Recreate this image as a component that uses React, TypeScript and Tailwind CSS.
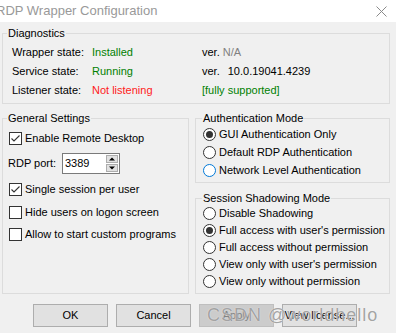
import React from "react";

function Check({ checked, label }: { checked: boolean; label: string }) {
  return (
    <div className="flex items-center h-[16px]">
      <span className="w-[13px] h-[13px] border border-[#333333] bg-white flex items-center justify-center shrink-0">
        {checked && (
          <svg width="11" height="11" viewBox="0 0 11 11">
            <path d="M1.5 5.5 L4 8 L9.5 2.5" fill="none" stroke="#333333" strokeWidth="1.1" />
          </svg>
        )}
      </span>
      <span className="ml-[3px] whitespace-nowrap">{label}</span>
    </div>
  );
}

function Radio({ on, label, h, blue }: { on?: boolean; label: string; h: string; blue?: boolean }) {
  return (
    <div className={"flex items-center " + h}>
      <span
        className={
          "w-[13px] h-[13px] rounded-full border bg-white flex items-center justify-center shrink-0 " +
          (blue ? "border-[#0078d7]" : "border-[#333333]")
        }
      >
        {on && <span className="w-[7px] h-[7px] rounded-full bg-[#333333]" />}
      </span>
      <span className="ml-[3px] whitespace-nowrap">{label}</span>
    </div>
  );
}

function Btn({ children, disabled }: { children: React.ReactNode; disabled?: boolean }) {
  return (
    <div
      className={
        "w-[75px] h-[23px] flex items-center justify-center border " +
        (disabled ? "bg-[#cccccc] border-[#bfbfbf] text-[#838383]" : "bg-[#e1e1e1] border-[#adadad] text-black")
      }
    >
      {children}
    </div>
  );
}

export default function App() {
  return (
    <div className="w-[396px] h-[333px] bg-[#f0f0f0] overflow-hidden relative font-['Liberation_Sans',Arial,sans-serif] text-[11px] leading-[13px] text-black">
      {/* title bar */}
      <div className="h-[22px] bg-white flex items-center justify-between">
        <span className="ml-[-4px] text-[13px] leading-[16px] text-[#999999] whitespace-nowrap">
          RDP Wrapper Configuration
        </span>
        <svg width="11" height="11" viewBox="0 0 11 11" className="mr-[9px]">
          <path d="M0.5 0.5 L10.5 10.5 M10.5 0.5 L0.5 10.5" stroke="#8a8a8a" strokeWidth="1" />
        </svg>
      </div>

      <div className="pl-[2px] pr-[6px]">
        {/* Diagnostics */}
        <fieldset className="mt-[5px] border border-[#dcdcdc] pl-[9px] pt-[3px] pb-[3px]">
          <legend className="ml-[-5px] px-[1px] leading-[13px]">Diagnostics</legend>
          <div className="grid grid-cols-[80px_110px_1fr] items-center h-[19px]">
            <span>Wrapper state:</span>
            <span className="text-[#008000]">Installed</span>
            <span>
              ver. <span className="text-[#808080]">N/A</span>
            </span>
          </div>
          <div className="grid grid-cols-[80px_110px_1fr] items-center h-[19px]">
            <span>Service state:</span>
            <span className="text-[#008000]">Running</span>
            <span>
              ver.<span className="ml-[8px]">10.0.19041.4239</span>
            </span>
          </div>
          <div className="grid grid-cols-[80px_110px_1fr] items-center h-[19px]">
            <span>Listener state:</span>
            <span className="text-[#ff1a1a]">Not listening</span>
            <span className="text-[#008000]">[fully supported]</span>
          </div>
        </fieldset>

        <div className="flex gap-[6px] mt-[8px]">
          {/* General Settings */}
          <fieldset className="w-[187px] border border-[#dcdcdc] pl-[6px] flex flex-col">
            <legend className="ml-[-2px] px-[1px] leading-[13px]">General Settings</legend>
            <div className="mt-[5px]">
              <Check checked label="Enable Remote Desktop" />
            </div>
            <div className="mt-[7px] flex items-center h-[21px]">
              <span className="ml-[-1px] w-[54px]">RDP port:</span>
              <div className="w-[58px] h-[21px] bg-white border border-[#7a7a7a] flex items-center justify-between">
                <span className="pl-[2px]">3389</span>
                <div className="flex flex-col gap-[1px] mr-[1px]">
                  <div className="w-[12px] h-[8px] bg-[#e1e1e1] border border-[#adadad] flex items-center justify-center">
                    <svg width="6" height="4" viewBox="0 0 6 4">
                      <path d="M0 3.5 L3 0.5 L6 3.5 Z" fill="#000" />
                    </svg>
                  </div>
                  <div className="w-[12px] h-[8px] bg-[#e1e1e1] border border-[#adadad] flex items-center justify-center">
                    <svg width="6" height="4" viewBox="0 0 6 4">
                      <path d="M0 0.5 L3 3.5 L6 0.5 Z" fill="#000" />
                    </svg>
                  </div>
                </div>
              </div>
            </div>
            <div className="mt-[7px]">
              <Check checked label="Single session per user" />
            </div>
            <div className="mt-[7px]">
              <Check checked={false} label="Hide users on logon screen" />
            </div>
            <div className="mt-[6px]">
              <Check checked={false} label="Allow to start custom programs" />
            </div>
          </fieldset>

          <div className="w-[195px] flex flex-col">
            <fieldset className="border border-[#dcdcdc] pl-[7px] pb-[3px]">
              <legend className="ml-[-1px] px-[1px] leading-[13px]">Authentication Mode</legend>
              <Radio on h="h-[18px]" label="GUI Authentication Only" />
              <Radio h="h-[18px]" label="Default RDP Authentication" />
              <Radio h="h-[18px]" blue label="Network Level Authentication" />
            </fieldset>
            <fieldset className="mt-[9px] border border-[#dcdcdc] pl-[7px] pb-[3px]">
              <legend className="ml-[-1px] px-[1px] leading-[13px]">Session Shadowing Mode</legend>
              <Radio h="h-[17px]" label="Disable Shadowing" />
              <Radio on h="h-[17px]" label="Full access with user's permission" />
              <Radio h="h-[17px]" label="Full access without permission" />
              <Radio h="h-[17px]" label="View only with user's permission" />
              <Radio h="h-[17px]" label="View only without permission" />
            </fieldset>
          </div>
        </div>
      </div>

      {/* buttons */}
      <div className="flex gap-[8px] pl-[33px] mt-[10px]">
        <Btn>OK</Btn>
        <Btn>Cancel</Btn>
        <Btn disabled>Apply</Btn>
        <Btn>View license...</Btn>
      </div>

      {/* watermark */}
      <div className="absolute left-[207px] top-[304px] text-[18px] leading-[22px] tracking-[1px] text-[#8c8c8c]/80 whitespace-nowrap pointer-events-none [text-shadow:0_0_1px_#fff]">
        CSDN @worldhello
      </div>
    </div>
  );
}
